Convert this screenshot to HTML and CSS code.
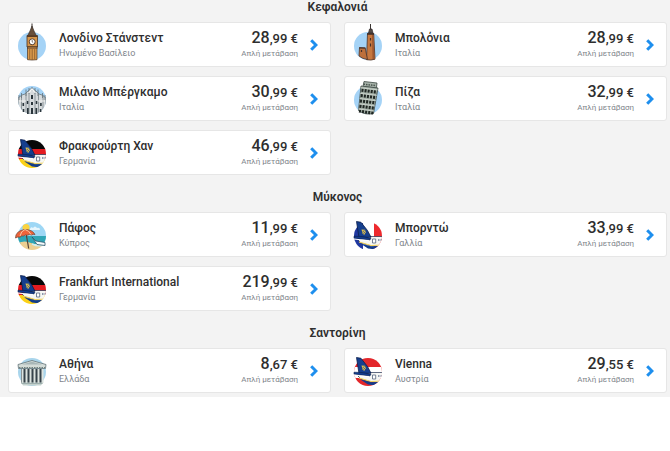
FILE: index.html
```html
<!DOCTYPE html>
<html lang="el">
<head>
<meta charset="utf-8">
<meta name="viewport" content="width=device-width, initial-scale=1">
<title>Προσφορές πτήσεων</title>
<link rel="stylesheet" href="styles.css">
</head>
<body>
<svg class="sprite" aria-hidden="true">
  <defs>
    <clipPath id="disc"><circle cx="18" cy="23" r="14"/></clipPath>
    <symbol id="chevron" viewBox="0 0 8 12"><path d="M1.200 1.200 6 6 1.200 10.800" fill="none" stroke="#1e8fee" stroke-width="3"/></symbol>
    <symbol id="plane" viewBox="0 0 36 43">
      <g clip-path="url(#disc)">
        <path d="M8 27 20 23.500 36 23.500v7.500l-6 2.500-9-.5-10-3z" fill="#f6f7f4" stroke="#1c2b4d" stroke-width=".7"/>
        <path d="m9 29 12 3.500 11-.5" fill="none" stroke="#f2d25c" stroke-width="1.200"/>
        <path d="m10 30.300 11 3 10-.3-5 3.500-8-1z" fill="#123c8c"/>
        <path d="M22.500 26h3.200v4h-3.200z" fill="#fff" stroke="#55657c" stroke-width=".8"/>
        <path d="M28 27h1.500m1 0H32" stroke="#243b66"/>
      </g>
      <path d="m6.500 8.500 4.500.8 6.500 8.200 3.500 6.700L9 24.500z" fill="#153f8e" stroke="#0b1e4b" stroke-width=".8"/>
      <path d="m4 23.200 8 .3 9 1.700-1.200 1.800L4 25.200z" fill="#123c8c" stroke="#0b1e4b" stroke-width=".6"/>
      <path d="m4 26 15 1.800" stroke="#fff" stroke-width="1.100"/>
      <path d="m11.500 16.500 3.500.3.700 2.500-1.500 2.700-1.600-1.500z" fill="#e0c14c"/>
      <path d="m12.500 19 2-1.500m-1.200 3 1.700-1.300" stroke="#123c8c" stroke-width=".7"/>
    </symbol>
    <symbol id="germany" viewBox="0 0 36 43">
      <g clip-path="url(#disc)"><path d="M4 9h28v9H4z" fill="#080808"/><path d="M4 18h28v11H4z" fill="#e41b20"/><path d="M4 28h28v10H4z" fill="#fbd116"/></g>
      <use href="#plane"/>
    </symbol>
  </defs>
</svg>
<main class="fares">
  <section>
    <h2 class="heading">Κεφαλονιά</h2>
    <ul class="grid">
      <li><a class="card" href="#">
        <svg class="icon" viewBox="0 0 36 43" aria-hidden="true">
          <circle cx="18" cy="23" r="14" fill="#a5d3f6"/>
          <path d="M18 .5v5" stroke="#39302c" stroke-width="1"/>
          <path d="m18 3 2 5 2.500 5h-9l2.500-5z" fill="#68503c" stroke="#39302c" stroke-width=".7"/>
          <path d="M13 12.500h10.500V24H13z" fill="#d69548" stroke="#4b3423" stroke-width=".8"/>
          <path d="M13.500 23.500h9.500v13.200q-5 .7-9.500 0z" fill="#dc9b4c" stroke="#4b3423" stroke-width=".7"/>
          <path d="M15.700 26v10M18.200 26v11M20.700 26v10" stroke="#795026" stroke-width=".7"/>
          <path d="M13 25h10.500M13 13.500h10.500" stroke="#583b25"/>
          <circle cx="18.200" cy="18.800" r="3" fill="#fff" stroke="#59402e"/>
          <path d="M18.200 17v2l1 .7" fill="none" stroke="#39302c" stroke-width=".6"/>
        </svg>
        <span class="place"><span class="city">Λονδίνο Στάνστεντ</span><span class="country">Ηνωμένο Βασίλειο</span></span>
        <span class="fare"><span class="price"><b class="euros">28</b>,99 €</span><span class="trip">Απλή μετάβαση</span></span>
        <svg class="arrow" aria-hidden="true"><use href="#chevron"/></svg>
      </a></li>
      <li><a class="card" href="#">
        <svg class="icon" viewBox="0 0 36 43" aria-hidden="true">
          <circle cx="18" cy="23" r="14" fill="#a5d3f6"/>
          <path d="M20.500 1v7" stroke="#3b3532"/>
          <path d="m18.500 10 1-4h2.500l1 4z" fill="#554c48" stroke="#30292b" stroke-width=".7"/>
          <path d="M17.500 10.500h6.200L25 36.200q-4 1.500-8.500.5z" fill="#c67840" stroke="#4c3329" stroke-width=".8"/>
          <path d="M22 11.500h1.300l1.200 24.500h-2z" fill="#9e572f"/>
          <path d="M17 11h7" stroke="#3b2c29" stroke-width="1.500"/>
          <path d="m9.500 24.500 5.700.5 2.300 11.500q-5-.5-8.500-3.500z" fill="#bd703c" stroke="#4c3329" stroke-width=".8"/>
          <path d="M9 25h6.500M11.500 27v2m9-14v2.500m0 3v3" stroke="#463029" stroke-width="1.200"/>
        </svg>
        <span class="place"><span class="city">Μπολόνια</span><span class="country">Ιταλία</span></span>
        <span class="fare"><span class="price"><b class="euros">28</b>,99 €</span><span class="trip">Απλή μετάβαση</span></span>
        <svg class="arrow" aria-hidden="true"><use href="#chevron"/></svg>
      </a></li>
      <li><a class="card" href="#">
        <svg class="icon" viewBox="0 0 36 43" aria-hidden="true">
          <circle cx="18" cy="23" r="14" fill="#a5d3f6"/>
          <g clip-path="url(#disc)">
            <path d="M4 21l4-3 3-1 3-3 4-3 4 3 3 3 3 1 4 3v16H4z" fill="#d6dadc" stroke="#59656c" stroke-width=".7"/>
            <path d="M7.500 18v19M12 16v21M15 14v23M21 14v23M24.500 16v21M29 18v19" stroke="#7b858a" stroke-width=".8"/>
            <path d="M5 24h7m12 0h7" stroke="#f4f4f3"/>
          </g>
          <path d="M5 18v5m2.500-7v5M12 12.500V19m3-8v6m6-6v6m3-4.500V19m4.500-3v5m2.500-3v5M18 10v4" stroke="#65747c" stroke-width=".8"/>
          <path d="m14.500 16 3.500-4 3.500 4" fill="none" stroke="#f7f7f5" stroke-width="1.200"/>
          <path d="M17 18h2v4h-2zm0 7h2v3h-2zm0 6h2v6h-2zM12.800 24h1.500v3h-1.500zm9 0h1.500v3h-1.500zM13 31h1.700v6H13zm8.500 0h1.700v6h-1.700zM8.500 26h1.600v3H8.500zm17.600 0h1.600v3h-1.600zM8.700 32h1.600v3H8.700zm17.100 0h1.600v3h-1.600z" fill="#2a353b"/>
        </svg>
        <span class="place"><span class="city">Μιλάνο Μπέργκαμο</span><span class="country">Ιταλία</span></span>
        <span class="fare"><span class="price"><b class="euros">30</b>,99 €</span><span class="trip">Απλή μετάβαση</span></span>
        <svg class="arrow" aria-hidden="true"><use href="#chevron"/></svg>
      </a></li>
      <li><a class="card" href="#">
        <svg class="icon" viewBox="0 0 36 43" aria-hidden="true">
          <circle cx="18" cy="23" r="14" fill="#a5d3f6"/>
          <path d="M14 4.500 27 6l-.6 5L13 9.500z" fill="#a6b2a9" stroke="#3e4944" stroke-width=".8"/>
          <path d="m11 9 17 2-4.500 25.500q-8 2-15-3z" fill="#a4b1a7" stroke="#3e4944" stroke-width=".8"/>
          <path d="M13.500 7.200 26 8.600" stroke="#4a554f" stroke-width="1.500" stroke-dasharray="1.500 1"/>
          <path d="m11.500 13.200 15.500 2m-16.200 3.300 15.200 2m-16 3.300 15.200 2m-15.700 3.300 14.700 2m-15.200 2.900 14.300 2" stroke="#202723" stroke-width="3.200" stroke-dasharray="2 1.100"/>
          <path d="m11 10.800 16.500 2m-17.300 3.500 16.500 2m-17 3.300 16 2m-16.500 3.300 15.500 2m-16.200 3.100 15.300 2" stroke="#c9d1ca" stroke-width="1"/>
        </svg>
        <span class="place"><span class="city">Πίζα</span><span class="country">Ιταλία</span></span>
        <span class="fare"><span class="price"><b class="euros">32</b>,99 €</span><span class="trip">Απλή μετάβαση</span></span>
        <svg class="arrow" aria-hidden="true"><use href="#chevron"/></svg>
      </a></li>
      <li><a class="card" href="#">
        <svg class="icon" aria-hidden="true"><use href="#germany"/></svg>
        <span class="place"><span class="city">Φρακφούρτη Χαν</span><span class="country">Γερμανία</span></span>
        <span class="fare"><span class="price"><b class="euros">46</b>,99 €</span><span class="trip">Απλή μετάβαση</span></span>
        <svg class="arrow" aria-hidden="true"><use href="#chevron"/></svg>
      </a></li>
    </ul>
  </section>
  <section>
    <h2 class="heading">Μύκονος</h2>
    <ul class="grid">
      <li><a class="card" href="#">
        <svg class="icon" viewBox="0 0 36 43" aria-hidden="true">
          <g clip-path="url(#disc)">
            <path d="M4 9h28v17H4z" fill="#9ed7f5"/>
            <circle cx="12" cy="14.500" r="3.500" fill="#fbd33f"/>
            <path d="M16 16q1-3 3-1 2-3 4 0 3-1 3 2H16z" fill="#e7f6fd"/>
            <path d="M4 23h28v8H4z" fill="#2fa6b6"/>
            <path d="M4 30q7-3 13 0 6 3 15 1v7H4z" fill="#edcf91"/>
            <path d="M18 31q6 3 14 1" fill="none" stroke="#cfeff2" stroke-width="1.500"/>
          </g>
          <path d="m18 24 4 4 9 1.500v3l-8-1z" fill="#f7fbfc" stroke="#28546b" stroke-width=".8"/>
          <path d="m11.500 17.500 3.200 18" stroke="#554438" stroke-width="1.200"/>
          <path d="M1.500 25q0-7 9-8.500 8 0 10.500 5-2-.6-3.500.5-2-1.300-4 .2-2.200-.8-4 .8-2-.7-3.500 1.200-2-.8-4.500.8z" fill="#ef633a" stroke="#6d4231" stroke-width=".7"/>
          <path d="M6 23q1-5 5-6.500 4 1 6 5" fill="none" stroke="#f5c8a4" stroke-width="1"/>
        </svg>
        <span class="place"><span class="city">Πάφος</span><span class="country">Κύπρος</span></span>
        <span class="fare"><span class="price"><b class="euros">11</b>,99 €</span><span class="trip">Απλή μετάβαση</span></span>
        <svg class="arrow" aria-hidden="true"><use href="#chevron"/></svg>
      </a></li>
      <li><a class="card" href="#">
        <svg class="icon" viewBox="0 0 36 43" aria-hidden="true">
          <g clip-path="url(#disc)"><path d="M4 9h9v29H4z" fill="#2038a0"/><path d="M13 9h11v29H13z" fill="#fff"/><path d="M24 9h8v29h-8z" fill="#ee292d"/></g>
          <use href="#plane"/>
        </svg>
        <span class="place"><span class="city">Μπορντώ</span><span class="country">Γαλλία</span></span>
        <span class="fare"><span class="price"><b class="euros">33</b>,99 €</span><span class="trip">Απλή μετάβαση</span></span>
        <svg class="arrow" aria-hidden="true"><use href="#chevron"/></svg>
      </a></li>
      <li><a class="card" href="#">
        <svg class="icon" aria-hidden="true"><use href="#germany"/></svg>
        <span class="place"><span class="city">Frankfurt International</span><span class="country">Γερμανία</span></span>
        <span class="fare"><span class="price"><b class="euros">219</b>,99 €</span><span class="trip">Απλή μετάβαση</span></span>
        <svg class="arrow" aria-hidden="true"><use href="#chevron"/></svg>
      </a></li>
    </ul>
  </section>
  <section>
    <h2 class="heading">Σαντορίνη</h2>
    <ul class="grid">
      <li><a class="card" href="#">
        <svg class="icon" viewBox="0 0 36 43" aria-hidden="true">
          <circle cx="18" cy="23" r="14" fill="#a9d5ec"/>
          <path d="M7 20h22v14q-11 3-22 0z" fill="#36434a"/>
          <path d="M8.500 20v14m4-14v15m4-15v16m4-16v16m4-16v15m4-15v14" stroke="#dce3df" stroke-width="2"/>
          <path d="m4 15.500 14-4 14 4-.5 4h-27z" fill="#d4dcd8" stroke="#65757a" stroke-width=".8"/>
          <path d="m8 15.500 10-2.700 10 2.700z" fill="#a7b6b7"/>
          <path d="M5 18.500h26" stroke="#71817e" stroke-width="1" stroke-dasharray="1.500 1"/>
          <path d="M7 33.500h22l-2 3H9z" fill="#c4d2ce"/>
          <path d="M7.500 34.500h21" stroke="#8da09f" stroke-width=".7"/>
        </svg>
        <span class="place"><span class="city">Αθήνα</span><span class="country">Ελλάδα</span></span>
        <span class="fare"><span class="price"><b class="euros">8</b>,67 €</span><span class="trip">Απλή μετάβαση</span></span>
        <svg class="arrow" aria-hidden="true"><use href="#chevron"/></svg>
      </a></li>
      <li><a class="card" href="#">
        <svg class="icon" viewBox="0 0 36 43" aria-hidden="true">
          <g clip-path="url(#disc)"><path d="M4 9h28v29H4z" fill="#e3272b"/><path d="M4 18h28v11H4z" fill="#fff"/></g>
          <use href="#plane"/>
        </svg>
        <span class="place"><span class="city">Vienna</span><span class="country">Αυστρία</span></span>
        <span class="fare"><span class="price"><b class="euros">29</b>,55 €</span><span class="trip">Απλή μετάβαση</span></span>
        <svg class="arrow" aria-hidden="true"><use href="#chevron"/></svg>
      </a></li>
    </ul>
  </section>
</main>
</body>
</html>
```
FILE: styles.css
```css
* {
  box-sizing: border-box;
}

body {
  margin: 0;
  background: #fff;
  color: #2e2e2e;
  font-family: Roboto, "Liberation Sans", sans-serif;
}

.sprite {
  position: absolute;
  width: 0;
  height: 0;
}

.fares {
  display: flex;
  flex-direction: column;
  gap: 15px;
  padding: 0 3px 4px 8px;
  background: #f3f3f3;
}

.heading {
  margin: 0;
  padding-bottom: 8px;
  font-size: 12px;
  line-height: 14px;
  font-weight: 600;
  text-align: center;
}

.grid {
  display: grid;
  grid-template-columns: 1fr 1fr;
  gap: 9px 13px;
  margin: 0;
  padding: 0;
  list-style: none;
}

.card {
  display: flex;
  align-items: center;
  height: 45px;
  padding: 0 12px 0 5px;
  border: 1px solid #e6e6e6;
  border-radius: 3px;
  background: #fff;
  color: inherit;
  text-decoration: none;
}

.icon {
  flex: none;
  width: 36px;
  height: 43px;
}

.place,
.fare {
  display: flex;
  flex-direction: column;
}

.place {
  flex: 1;
  min-width: 0;
  margin-left: 9px;
}

.city {
  font-size: 12px;
  line-height: 16px;
  font-weight: 500;
}

.country {
  font-size: 9px;
  line-height: 14px;
  color: #7f868c;
}

.fare {
  align-items: flex-end;
}

.price {
  font-size: 13px;
  line-height: 18px;
  font-weight: 500;
}

.euros {
  font-size: 16px;
  font-weight: 500;
}

.trip {
  font-size: 8px;
  line-height: 12px;
  color: #7f868c;
}

.arrow {
  flex: none;
  width: 8px;
  height: 12px;
  margin-left: 12px;
}
```
